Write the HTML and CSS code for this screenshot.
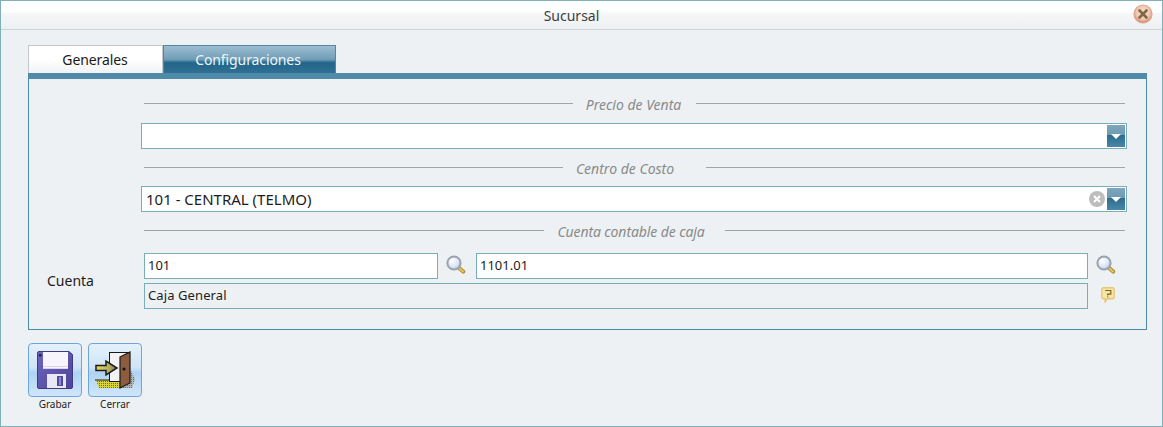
FILE: index.html
```html
<!DOCTYPE html>
<html lang="es">
<head>
<meta charset="utf-8">
<title>Sucursal</title>
<link rel="stylesheet" href="styles.css">
</head>
<body>
<div class="window">
  <header class="titlebar">
    <span class="title">Sucursal</span>
    <svg class="close" viewBox="0 0 20 20" width="20" height="20">
      <defs><radialGradient id="cg" cx=".5" cy=".42" r=".55"><stop offset="0" stop-color="#f5e3d8"/><stop offset=".7" stop-color="#ecc7b2"/><stop offset="1" stop-color="#d08a6e"/></radialGradient></defs>
      <circle cx="10" cy="10" r="9" fill="url(#cg)" stroke="#dfa58d" stroke-width="1.200"/>
      <path d="M6.500 6.500l7 7M13.500 6.500l-7 7" stroke="#83683f" stroke-width="2.600" stroke-linecap="round"/>
    </svg>
  </header>
  <main class="content">
    <nav class="tabs">
      <div class="tab tab-light">Generales</div>
      <div class="tab tab-active">Configuraciones</div>
    </nav>
    <section class="panel">
      <div class="legend legend-first"><span>Precio de Venta</span></div>
      <div class="combo">
        <span class="combo-text"></span>
        <span class="combo-btn"><i class="caret"></i></span>
      </div>
      <div class="legend legend-second"><span>Centro de Costo</span></div>
      <div class="combo">
        <span class="combo-text">101 - CENTRAL (TELMO)</span>
        <svg class="clear" viewBox="0 0 16 16" width="16" height="16">
          <circle cx="8" cy="8" r="8" fill="#bdbdbd"/>
          <path d="M5 5l6 6M11 5l-6 6" stroke="#fff" stroke-width="2"/>
        </svg>
        <span class="combo-btn"><i class="caret"></i></span>
      </div>
      <div class="legend legend-third"><span>Cuenta contable de caja</span></div>
      <div class="account">
        <label class="account-label">Cuenta</label>
        <div class="account-fields">
          <div class="field-row">
            <div class="input input-code">101</div>
            <svg class="lens" viewBox="0 0 20 20" width="20" height="20"><use href="#lens"/></svg>
            <div class="input input-grow">1101.01</div>
            <svg class="lens" viewBox="0 0 20 20" width="20" height="20"><use href="#lens"/></svg>
          </div>
          <div class="field-row field-row-second">
            <div class="input input-readonly">Caja General</div>
            <svg class="note" viewBox="0 0 14 16" width="14" height="16">
              <path d="M2.500 .8h9a1.700 1.700 0 0 1 1.700 1.700v7.500a1.700 1.700 0 0 1-1.700 1.700H6.500L4 15v-3.300H2.500A1.700 1.700 0 0 1 .8 10V2.500A1.700 1.700 0 0 1 2.500 .8z" fill="#f7e6a3" stroke="#e6c679" stroke-width="1.400"/>
              <path d="M4.200 3.500h5.600v3.600H6.700v1.300M6.700 9.500v1" fill="none" stroke="#7d6530" stroke-width="1.200"/>
            </svg>
          </div>
        </div>
      </div>
    </section>
    <div class="actions">
      <div class="action">
        <button class="action-btn" type="button" aria-label="Grabar">
          <svg class="floppy" viewBox="0 0 36 38" width="36" height="38">
            <defs><linearGradient id="fb" x1="0" y1="0" x2="1" y2="1"><stop offset="0" stop-color="#6f67bb"/><stop offset="1" stop-color="#4b4498"/></linearGradient></defs>
            <path d="M2 .5h30l3.500 3V36a1.500 1.500 0 0 1-1.500 1.500H2A1.500 1.500 0 0 1 .5 36V2A1.500 1.500 0 0 1 2 .5z" fill="url(#fb)" stroke="#3f3a84"/>
            <rect x="6" y="1" width="25" height="17" fill="#f7f5fb"/>
            <path d="M6 15.500h25M6 17.500h25" stroke="#d8d3ee"/>
            <rect x="2" y="3" width="2.500" height="2.500" fill="#23214a"/>
            <rect x="10" y="23" width="19" height="14" fill="#e9e8f2"/>
            <rect x="20" y="25" width="6" height="10" fill="#4f49a0"/>
            <rect x="22" y="26" width="2" height="8" fill="#8d88cc"/>
          </svg>
        </button>
        <span class="action-label">Grabar</span>
      </div>
      <div class="action">
        <button class="action-btn" type="button" aria-label="Cerrar">
          <svg class="door" viewBox="0 0 41 38" width="41" height="38">
            <defs>
              <pattern id="dy" width="2" height="2" patternUnits="userSpaceOnUse"><rect width="2" height="2" fill="#d8d23c"/><rect width="1" height="1" fill="#6f6c22"/></pattern>
              <pattern id="dg" width="2" height="2" patternUnits="userSpaceOnUse"><rect width="2" height="2" fill="#b5b5b5"/><rect width="1" height="1" fill="#6d6d6d"/></pattern>
              <linearGradient id="da" x1="0" y1="0" x2="1" y2="0"><stop offset="0" stop-color="#e6da5e"/><stop offset=".6" stop-color="#b9b05a"/><stop offset="1" stop-color="#77756a"/></linearGradient>
            </defs>
            <path d="M30 20h6l4 8-3 9H26z" fill="url(#dg)"/>
            <path d="M1 29h25l2 8H4z" fill="url(#dy)"/>
            <path d="M0 29h26" stroke="#1a1a1a"/>
            <rect x="14.500" y="1.500" width="19" height="29" fill="#f3f3f3" stroke="#1a1a1a"/>
            <path d="M25 6l10-5v31l-10 5z" fill="#8c5c3e" stroke="#1a1a1a" stroke-width="1.200"/>
            <circle cx="29" cy="18" r="1.500" fill="#111"/>
            <path d="M1 14.500h10V10l11 7-11 7v-4.500H1z" fill="url(#da)" stroke="#1a1a1a" stroke-width="1.500"/>
          </svg>
        </button>
        <span class="action-label">Cerrar</span>
      </div>
    </div>
  </main>
</div>
<svg class="defs" width="0" height="0" aria-hidden="true">
  <defs>
    <radialGradient id="lg" cx=".38" cy=".32" r=".75"><stop offset="0" stop-color="#ffffff"/><stop offset=".6" stop-color="#dde6f5"/><stop offset="1" stop-color="#a9bfe2"/></radialGradient>
    <g id="lens">
      <path d="M13 13l4.200 3.600" stroke="#a98d36" stroke-width="4" stroke-linecap="round"/>
      <path d="M13.500 13.500l3.500 3" stroke="#e4c860" stroke-width="2" stroke-linecap="round"/>
      <circle cx="8" cy="8" r="6.600" fill="url(#lg)" stroke="#9aa3ad" stroke-width="2"/>
    </g>
  </defs>
</svg>
</body>
</html>
```
FILE: styles.css
```css
* { box-sizing: border-box; }
html, body { margin: 0; height: 100%; }
body {
  width: 1163px;
  height: 427px;
  overflow: hidden;
  font-family: "Noto Sans", "DejaVu Sans", sans-serif;
  font-size: 14px;
  color: #1c1c1c;
}
.window {
  width: 1163px;
  height: 427px;
  border: 1px solid #7fb0b8;
  background: #edf1f4;
  display: flex;
  flex-direction: column;
}
.titlebar {
  height: 29px;
  flex: none;
  padding-right: 20px;
  border-bottom: 1px solid #d0d3d5;
  background: linear-gradient(#ffffff 0, #ffffff 11px, #f6f7f7 12px, #edf0f1 100%);
  display: flex;
  align-items: center;
  justify-content: center;
  position: relative;
}
.title { font-size: 14px; color: #3e3e3e; }
.close { position: absolute; right: 9px; top: 3px; }
.content { padding: 15px 15px 0 27px; flex: 1; }
.tabs { display: flex; height: 28px; }
.tab {
  display: flex;
  align-items: center;
  justify-content: center;
  font-size: 14px;
  letter-spacing: -0.1px;
}
.tab-light {
  width: 135px;
  padding-right: 1px;
  border: 1px solid #c4c8ca;
  border-bottom: 0;
  background: linear-gradient(#fff 0, #fff 50%, #f1f3f4 100%);
  color: #1a1a1a;
}
.tab-active {
  width: 173px;
  padding-right: 3px;
  border: 1px solid #4e88a3;
  border-bottom: 0;
  color: #eef5f8;
  background: linear-gradient(#9dbdd1 0, #6f9db6 50%, #23658a 62%, #2f7093 100%);
}
.panel {
  width: 1119px;
  height: 257px;
  border: 1px solid #4c8aa8;
  border-top: 6px solid #4f8ba8;
  padding: 0 21px 0 112px;
}
.legend {
  display: flex;
  align-items: center;
  margin-left: 3px;
  height: 18px;
  font-style: italic;
  font-size: 14px;
  color: #8a8a8a;
}
.legend span { padding: 3px 0 0 13px; }
.legend::before, .legend::after {
  content: "";
  flex: 1;
  height: 1px;
  background: #a3a3a3;
}
.legend-first { margin-top: 15px; margin-bottom: 11px; }
.legend-first span { padding-right: 15px; }
.legend-second { margin-top: 9px; margin-bottom: 10px; }
.legend-second span { padding-right: 32px; }
.legend-third { margin-top: 9px; margin-bottom: 14px; }
.legend-third span { padding-right: 20px; letter-spacing: -0.1px; }
.combo {
  height: 26px;
  width: 986px;
  border: 1px solid #79aeb8;
  background: #fff;
  display: flex;
  align-items: center;
  padding-right: 1px;
}
.combo-text { flex: 1; padding-left: 4px; font-size: 15px; }
.clear { margin-right: 2px; }
.combo-btn {
  width: 18px;
  height: 22px;
  display: flex;
  align-items: center;
  justify-content: center;
  background: linear-gradient(#7fa6bd 0, #6d9ab3 45%, #2a6c8e 46%, #4b87a4 100%);
}
.caret {
  width: 0;
  height: 0;
  border-left: 5px solid transparent;
  border-right: 5px solid transparent;
  border-top: 5px solid #fff;
}
.account { display: flex; margin-left: -112px; }
.account-label {
  width: 115px;
  padding: 18px 0 0 18px;
  font-size: 14px;
}
.account-fields { flex: 1; }
.field-row { display: flex; align-items: center; height: 26px; }
.field-row-second { margin-top: 4px; }
.input {
  height: 26px;
  border: 1px solid #79aeb8;
  background: #fff;
  display: flex;
  align-items: center;
  padding: 0 0 2px 3px;
  font-size: 13px;
}
.input-code { width: 294px; }
.input-grow { width: 612px; }
.input-readonly { width: 944px; background: #edf1f4; letter-spacing: 0.1px; }
.lens { margin: -3px 10px 0 8px; }
.lens:last-child { margin-right: 0; }
.note { margin: -3px 0 0 13px; }
.actions { display: flex; gap: 6px; margin-top: 13px; margin-left: 0; }
.action { width: 54px; display: flex; flex-direction: column; align-items: center; }
.action-btn {
  width: 54px;
  height: 54px;
  padding: 0;
  border: 1px solid #6ea5dc;
  border-radius: 4px;
  background: linear-gradient(#e5f1fb 0, #cfe4f7 45%, #aed3f3 55%, #cfe6fa 100%);
  display: flex;
  align-items: center;
  justify-content: center;
}
.action-label { font-size: 10px; color: #1c1c1c; }
.defs { position: absolute; }
```
